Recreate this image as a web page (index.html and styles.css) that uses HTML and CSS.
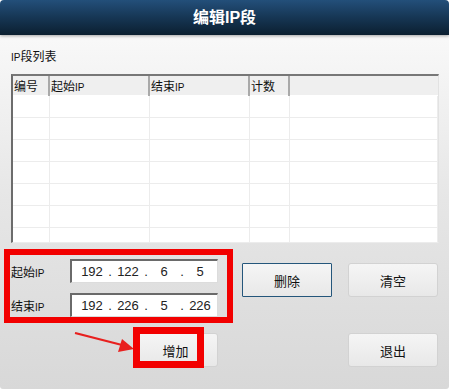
FILE: index.html
```html
<!DOCTYPE html>
<html lang="zh-CN">
<head>
    <meta charset="UTF-8">
    <title>编辑IP段</title>
    <link rel="stylesheet" href="styles.css">
</head>
<body>
    <div class="dialog">
        <div class="titlebar">编辑IP段</div>

        <div class="content">
            <div class="section-label"><span class="ip">IP</span>段列表</div>

            <div class="list">
                <table class="ip-table">
                    <colgroup>
                        <col class="c-no">
                        <col class="c-ip">
                        <col class="c-ip">
                        <col class="c-count">
                        <col>
                    </colgroup>
                    <thead>
                        <tr>
                            <th>编号</th>
                            <th>起始<span class="ip">IP</span></th>
                            <th>结束<span class="ip">IP</span></th>
                            <th>计数</th>
                            <th class="filler"></th>
                        </tr>
                    </thead>
                    <tbody>
                        <tr><td></td><td></td><td></td><td></td><td></td></tr>
                        <tr><td></td><td></td><td></td><td></td><td></td></tr>
                        <tr><td></td><td></td><td></td><td></td><td></td></tr>
                        <tr><td></td><td></td><td></td><td></td><td></td></tr>
                        <tr><td></td><td></td><td></td><td></td><td></td></tr>
                        <tr><td></td><td></td><td></td><td></td><td></td></tr>
                        <tr><td></td><td></td><td></td><td></td><td></td></tr>
                    </tbody>
                </table>
            </div>

            <div class="form-area">
                <div class="field-box">
                    <div class="field">
                        <span class="field-label">起始<span class="ip">IP</span></span>
                        <div class="ip-input">
                            <span class="seg">192</span><span class="dot">.</span>
                            <span class="seg">122</span><span class="dot">.</span>
                            <span class="seg">6</span><span class="dot">.</span>
                            <span class="seg">5</span>
                        </div>
                    </div>
                    <div class="field">
                        <span class="field-label">结束<span class="ip">IP</span></span>
                        <div class="ip-input">
                            <span class="seg">192</span><span class="dot">.</span>
                            <span class="seg">226</span><span class="dot">.</span>
                            <span class="seg">5</span><span class="dot">.</span>
                            <span class="seg">226</span>
                        </div>
                    </div>
                </div>
                <div class="side-buttons">
                    <button class="btn focused">删除</button>
                    <button class="btn">清空</button>
                </div>
            </div>

            <div class="action-area">
                <div class="add-wrap">
                    <svg class="arrow" width="62" height="22" viewBox="0 0 62 22">
                        <line x1="1" y1="1" x2="48" y2="13" stroke="#e8201e" stroke-width="2.2"/>
                        <polygon points="60,17 44,20 48,7" fill="#e8201e"/>
                    </svg>
                    <button class="btn add">增加</button>
                    <div class="highlight"></div>
                </div>
                <button class="btn quit">退出</button>
            </div>
        </div>
    </div>
</body>
</html>
```

FILE: styles.css
```css
html {
    background: #ffffff;
}
body {
    margin: 0;
    padding: 0;
    font-family: 'Liberation Sans', 'Noto Sans CJK SC', sans-serif;
    font-size: 12px;
    color: #111;
}
.ip {
    font-size: 10px;
}
.dialog {
    width: 449px;
    height: 389px;
    overflow: hidden;
    border-radius: 4px 4px 3px 3px;
    background: linear-gradient(#f8f8f8 40px, #e6e6e6 200px, #d8d8d8 389px);
}
.titlebar {
    height: 35px;
    line-height: 36px;
    text-align: center;
    color: #fff;
    font-size: 16px;
    font-weight: bold;
    background: linear-gradient(#234f7a, #163654 50%, #0b1f30);
    box-shadow: 0 1px 3px rgba(0, 0, 0, 0.35);
    position: relative;
}
.content {
    padding-top: 14px;
}
.section-label {
    margin-left: 11px;
    height: 16px;
    line-height: 16px;
    font-size: 12px;
}
.list {
    margin: 9px 0 0 11px;
    width: 428px;
    height: 169px;
    box-sizing: border-box;
    border-top: 2px solid #777;
    border-left: 2px solid #6c6c6c;
    border-right: 1px solid #e2e2e2;
    border-bottom: 1px solid #ececec;
    background: #fff;
    overflow: hidden;
}
.ip-table {
    width: 425px;
    table-layout: fixed;
    border-collapse: collapse;
}
.c-no { width: 36px; }
.c-ip { width: 100px; }
.c-count { width: 40px; }
.ip-table th {
    height: 19px;
    padding: 0 0 0 1px;
    text-align: left;
    font-weight: normal;
    font-size: 12px;
    background: #efefef;
    border-right: 2px solid #a9a9a9;
    border-bottom: 1px solid #fff;
}
.ip-table th.filler {
    border-right: none;
}
.ip-table td {
    height: 21px;
    padding: 0;
    border-right: 1px solid #ececec;
    border-bottom: 1px solid #ececec;
}
.form-area {
    display: flex;
    margin-top: 6px;
    padding-left: 4px;
}
.field-box {
    width: 229px;
    height: 74px;
    box-sizing: border-box;
    border: 6px solid #f20000;
    padding: 4px 9px 0 1px;
    display: flex;
    flex-direction: column;
    gap: 10px;
}
.field {
    display: flex;
    align-items: center;
    height: 24px;
}
.field-label {
    width: 59px;
    font-size: 12px;
}
.ip-input {
    width: 148px;
    height: 24px;
    box-sizing: border-box;
    display: flex;
    align-items: center;
    padding-left: 6px;
    background: #fff;
    border-top: 2px solid #6a6a6a;
    border-left: 2px solid #6a6a6a;
    border-right: 1px solid #dcdcdc;
    border-bottom: 1px solid #dcdcdc;
    font-size: 13px;
    color: #222;
}
.seg {
    width: 28px;
    text-align: center;
}
.dot {
    width: 8px;
    text-align: center;
}
.side-buttons {
    display: flex;
    gap: 16px;
    margin: 14px 0 0 9px;
}
.btn {
    width: 90px;
    height: 34px;
    box-sizing: border-box;
    border: 1px solid #d2d2d2;
    border-radius: 3px;
    background: linear-gradient(#f5f5f5, #e8e8e8);
    font-family: 'Noto Sans CJK SC', 'Liberation Sans', sans-serif;
    font-size: 13px;
    color: #111;
    padding: 0;
}
.btn.focused {
    border: 1px solid #24567b;
    border-radius: 1px;
}
.action-area {
    display: flex;
    margin-top: 4px;
}
.add-wrap {
    position: relative;
    margin-left: 133px;
    width: 85px;
    height: 41px;
}
.btn.add {
    width: 85px;
    margin-top: 6px;
}
.highlight {
    position: absolute;
    left: 0;
    top: 0;
    width: 71px;
    height: 41px;
    box-sizing: border-box;
    border: 7px solid #f20000;
}
.arrow {
    position: absolute;
    left: -59px;
    top: 5px;
}
.btn.quit {
    margin: 6px 0 0 130px;
}
```
